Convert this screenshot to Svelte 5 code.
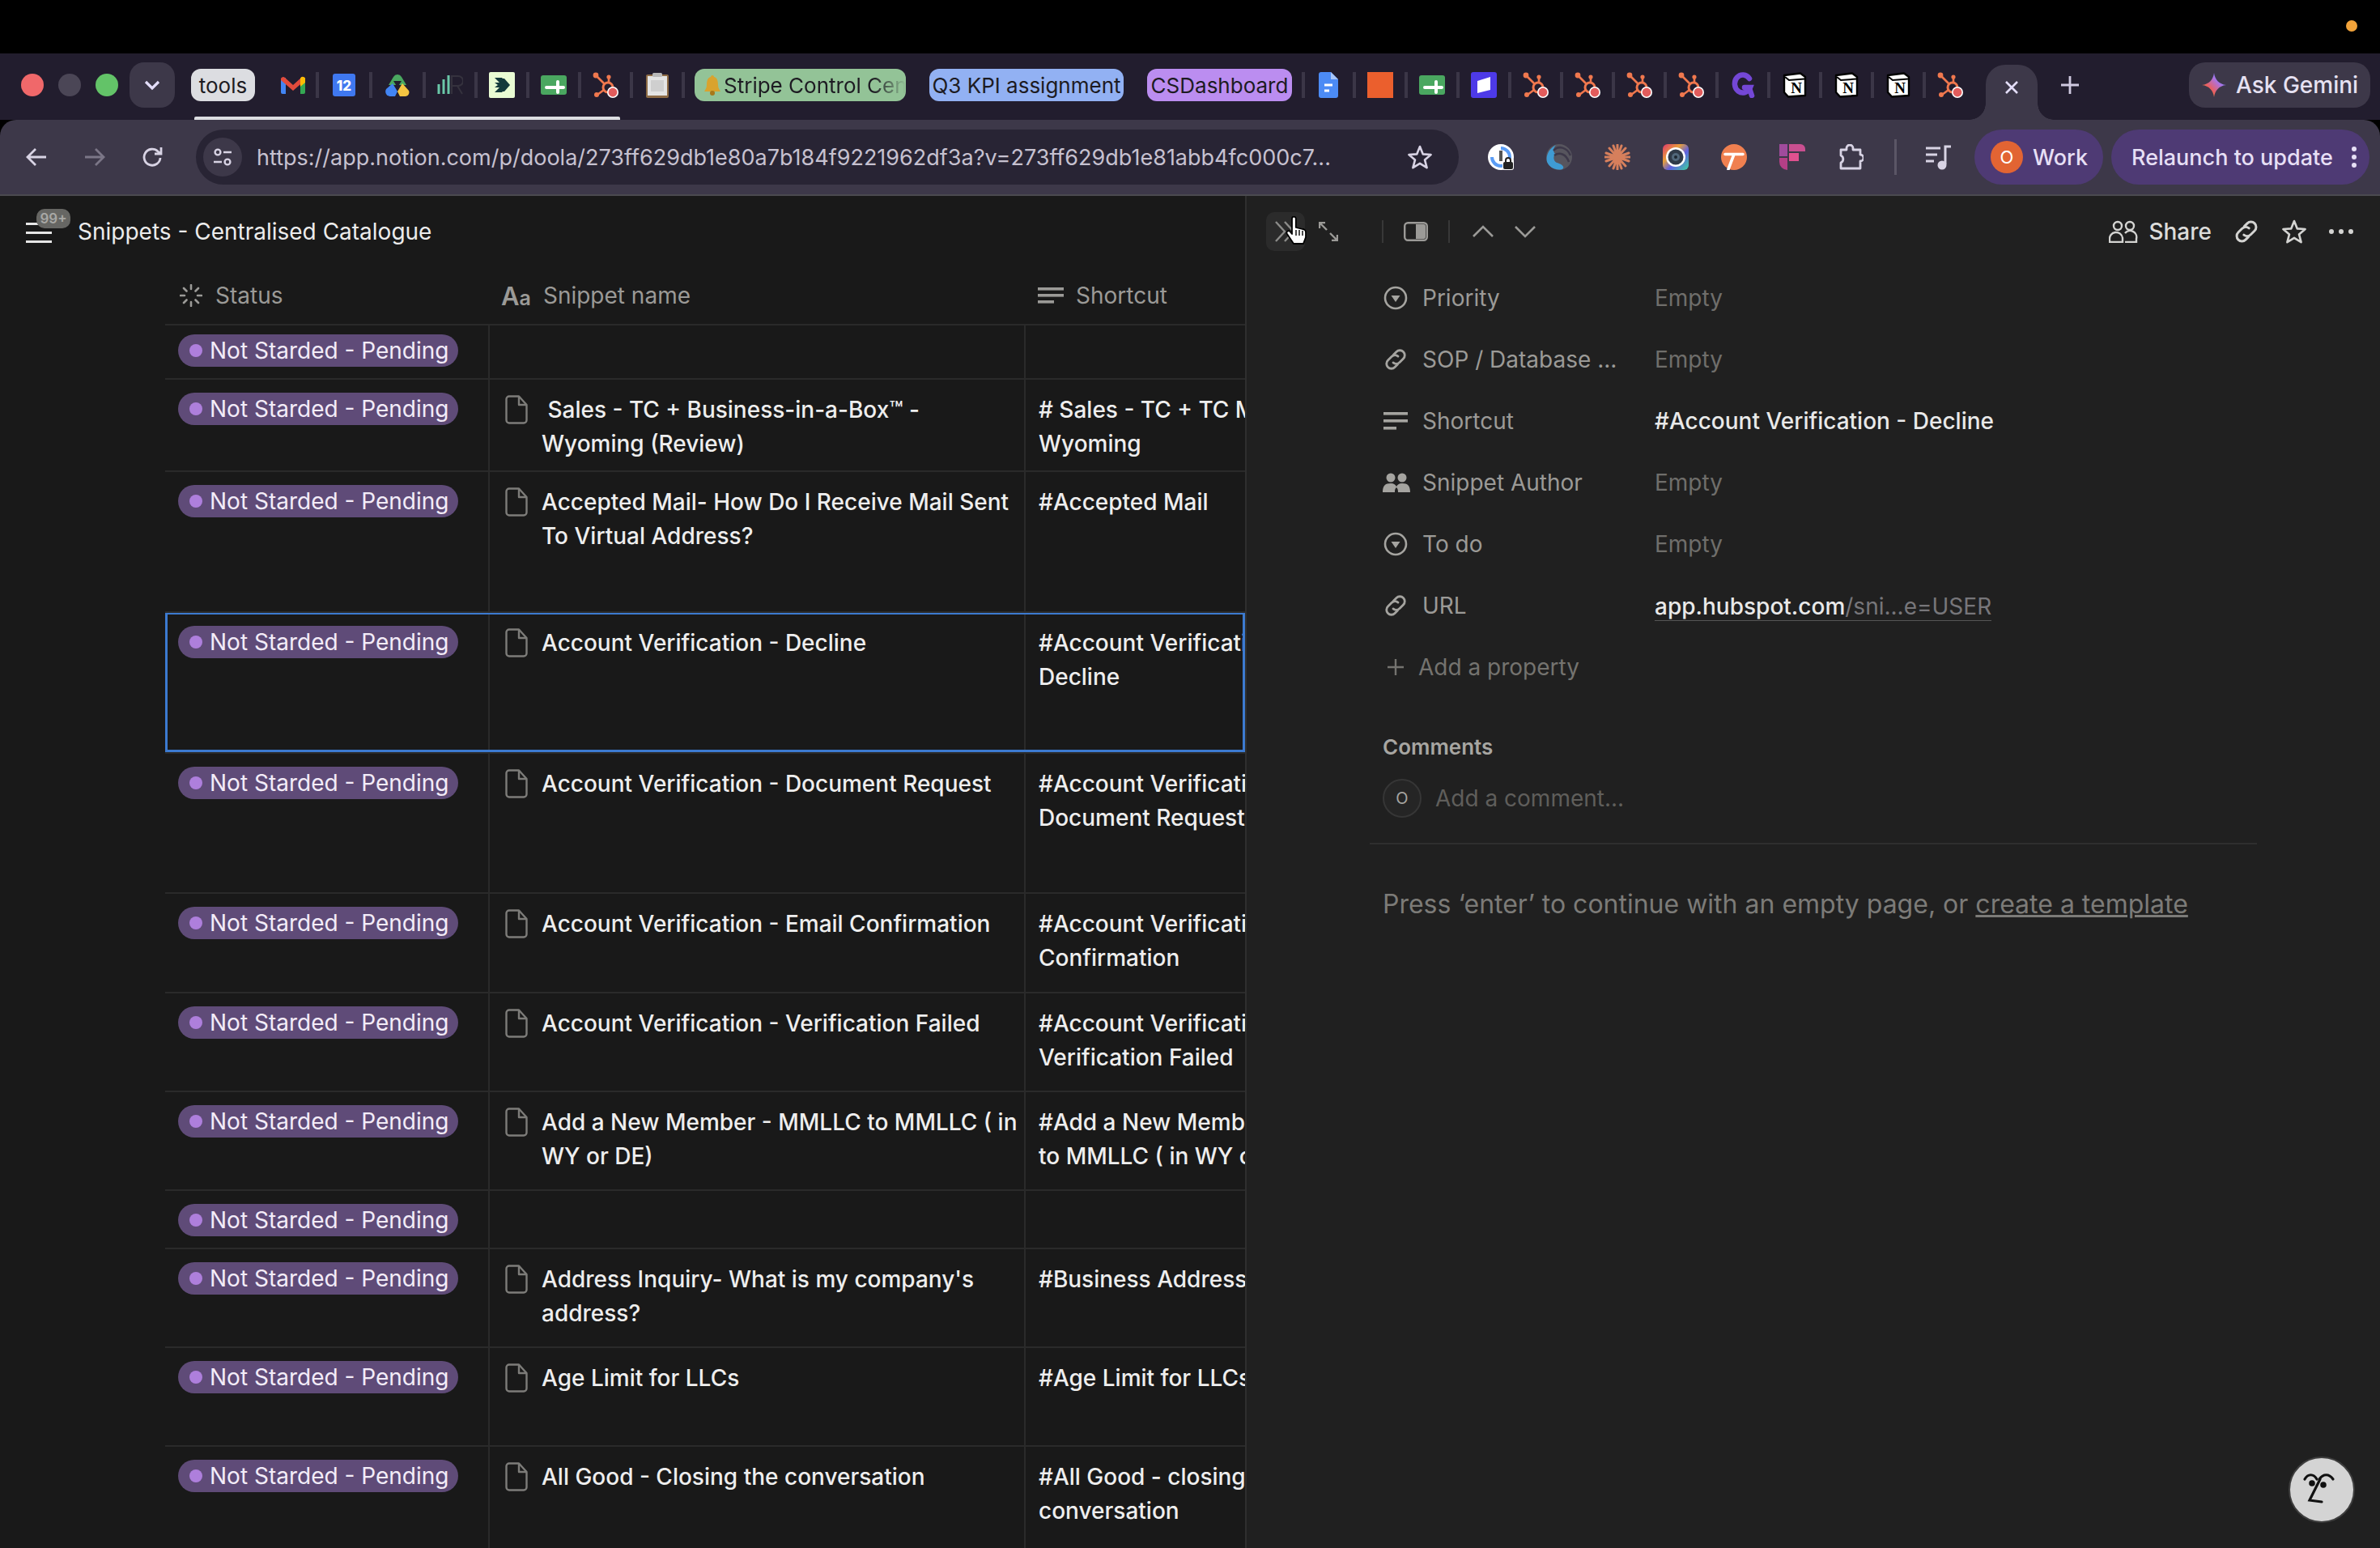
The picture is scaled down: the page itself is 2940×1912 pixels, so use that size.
<script>
  const rows = [
    { h: 67, first: true },
    { h: 114, name: [' Sales - TC + Business-in-a-Box™ -', 'Wyoming (Review)'], short: ['# Sales - TC + TC Mail', 'Wyoming'] },
    { h: 174, name: ['Accepted Mail- How Do I Receive Mail Sent', 'To Virtual Address?'], short: ['#Accepted Mail'] },
    { h: 174, sel: true, name: ['Account Verification - Decline'], short: ['#Account Verification -', 'Decline'] },
    { h: 173, name: ['Account Verification - Document Request'], short: ['#Account Verification -', 'Document Request'] },
    { h: 123, name: ['Account Verification - Email Confirmation'], short: ['#Account Verification - Email', 'Confirmation'] },
    { h: 122, name: ['Account Verification - Verification Failed'], short: ['#Account Verification -', 'Verification Failed'] },
    { h: 122, name: ['Add a New Member - MMLLC to MMLLC ( in', 'WY or DE)'], short: ['#Add a New Member - MMLLC', 'to MMLLC ( in WY or DE)'] },
    { h: 72 },
    { h: 122, name: ["Address Inquiry- What is my company's", 'address?'], short: ['#Business Address'] },
    { h: 122, name: ['Age Limit for LLCs'], short: ['#Age Limit for LLCs'] },
    { h: 130, name: ['All Good - Closing the conversation'], short: ['#All Good - closing the', 'conversation'] }
  ]

  const props = [
    { icon: 'select', label: 'Priority', value: 'Empty' },
    { icon: 'link', label: 'SOP / Database ...', value: 'Empty' },
    { icon: 'lines', label: 'Shortcut', value: '#Account Verification - Decline', filled: true },
    { icon: 'people', label: 'Snippet Author', value: 'Empty' },
    { icon: 'select', label: 'To do', value: 'Empty' },
    { icon: 'link', label: 'URL', url: true }
  ]
</script>

{#snippet hubspot()}
  <svg width="32" height="32" viewBox="0 0 32 32">
    <g stroke="#f0784e" fill="none" stroke-width="2.6">
      <path d="M4 4 L15 15" />
      <path d="M20 7 V13" />
      <path d="M6 28 L14 22" />
      <circle cx="19" cy="19" r="6" stroke-width="3" />
    </g>
    <circle cx="4" cy="4" r="3.4" fill="#f0784e" />
    <circle cx="20" cy="6" r="2.6" fill="#f0784e" />
    <circle cx="5" cy="28" r="3" fill="#f0784e" />
    <circle cx="25" cy="25" r="7" fill="#fff" />
    <circle cx="25" cy="25" r="5.4" fill="#e25c5c" />
  </svg>
{/snippet}

{#snippet notion()}
  <svg width="32" height="32" viewBox="0 0 32 32">
    <path d="M3 4 L23 1.5 L29 6 V29 L8 30.5 L3 25 Z" fill="#fff" stroke="#000" stroke-width="2.4" stroke-linejoin="round" />
    <path d="M4 6 L9 10 L28 8.5" fill="none" stroke="#000" stroke-width="2" />
    <text x="18" y="26" text-anchor="middle" font-size="19" font-weight="700" font-family="Liberation Serif, serif" fill="#000">N</text>
  </svg>
{/snippet}

{#snippet sheets()}
  <svg width="32" height="24" viewBox="0 0 32 24">
    <rect width="32" height="24" rx="3" fill="#4aa760" />
    <path d="M7 15 H28 M21 8 V21" stroke="#fff" stroke-width="4" stroke-linecap="round" />
  </svg>
{/snippet}

{#snippet linkIcon(size)}
  <svg width={size} height={size} viewBox="0 0 32 32" fill="none" stroke="currentColor" stroke-width="2.8" stroke-linecap="round">
    <path d="M13.5 10 L17 6.5 a6 6 0 0 1 8.5 8.5 L21 19.5 a6 6 0 0 1 -8 0.4" />
    <path d="M18.5 22 L15 25.5 a6 6 0 0 1 -8.5 -8.5 L11 12.5 a6 6 0 0 1 8 -0.4" />
  </svg>
{/snippet}

{#snippet star(size, color)}
  <svg width={size} height={size} viewBox="0 0 32 32" fill="none" stroke={color} stroke-width="2.6" stroke-linejoin="round">
    <path d="M16 3 L19.8 12.4 L29.6 13 L22 19.4 L24.6 29.2 L16 23.8 L7.4 29.2 L10 19.4 L2.4 13 L12.2 12.4 Z" />
  </svg>
{/snippet}

{#snippet docIcon()}
  <svg class="doc" width="28" height="36" viewBox="0 0 28 36" fill="none" stroke="#7d7c79" stroke-width="2.4" stroke-linejoin="round">
    <path d="M5 1.5 H17 L26.5 12 V31 a3.5 3.5 0 0 1 -3.5 3.5 H5 a3.5 3.5 0 0 1 -3.5 -3.5 V5 a3.5 3.5 0 0 1 3.5 -3.5 Z" />
    <path d="M17 1.5 V12 H26.5" />
  </svg>
{/snippet}

<div class="page">
  <div class="menubar"><span class="mic"></span></div>

  <div class="tabstrip">
    <div class="lights">
      <i class="red"></i><i class="gray"></i><i class="green"></i>
    </div>
    <button class="tabsearch" aria-label="tab search">
      <svg width="20" height="14" viewBox="0 0 20 14" fill="none" stroke="#e4defa" stroke-width="3.2"><path d="M2 3 L10 11 L18 3" /></svg>
    </button>
    <div class="group-label tools">tools</div>

    <div class="cell first">
      <svg width="30" height="22" viewBox="0 0 30 22">
        <path d="M0 20 V4 L6 2 V22 H2 a2 2 0 0 1 -2 -2 Z" fill="#4285f4" />
        <path d="M24 22 V2 L30 4 V20 a2 2 0 0 1 -2 2 Z" fill="#34a853" />
        <path d="M0 5 a3 3 0 0 1 5 -3 L15 11 L25 2 a3 3 0 0 1 5 3 L15 18 Z" fill="#e24b3c" />
        <path d="M24 3 a3 3 0 0 1 6 2 V8 L24 13 Z" fill="#fbbc04" />
      </svg>
    </div>
    <div class="cell wide">
      <svg width="28" height="28" viewBox="0 0 28 28">
        <rect width="28" height="28" rx="3" fill="#3f78f0" />
        <text x="14" y="20.5" text-anchor="middle" font-size="17" font-weight="800" font-family="Inter, sans-serif" fill="#fff">12</text>
      </svg>
    </div>
    <div class="cell wide">
      <svg width="30" height="28" viewBox="0 0 30 28">
        <path d="M15 1 a6 6 0 0 1 5 3 L26 14 H4 L10 4 a6 6 0 0 1 5 -3 Z" fill="#4aa860" />
        <path d="M10 9 H20 L15 17 Z" fill="#221d2e" />
        <path d="M9 12 L15 22 L12 28 H6 a6 6 0 0 1 -5 -9 Z" fill="#4285f4" />
        <path d="M21 12 L29 21 a5 5 0 0 1 -5 7 H18 L15 22 Z" fill="#f5c542" />
      </svg>
    </div>
    <div class="cell">
      <svg width="32" height="26" viewBox="0 0 32 26" fill="none">
        <path d="M2 12 V24 M8 6 V24 M14 1 V24" stroke="#6ac8a8" stroke-width="3" />
        <path d="M18 24 V2 H26 a5.5 5.5 0 0 1 0 12 H18 M25 14 L31 24" stroke="#35323e" stroke-width="2" />
      </svg>
    </div>
    <div class="cell">
      <svg width="32" height="32" viewBox="0 0 32 32">
        <rect width="32" height="32" rx="2" fill="#e9fbd3" />
        <path d="M7 7 H16 L24 16 L16 25 H7 L13 19 H7 L11 16 L7 13 H13 Z M15 8 H19 L26 16 L19 24 H15 L21 16 Z" fill="#143a3c" />
      </svg>
    </div>
    <div class="cell">{@render sheets()}</div>
    <div class="cell">{@render hubspot()}</div>
    <div class="cell">
      <svg width="28" height="32" viewBox="0 0 28 32">
        <rect y="3" width="28" height="29" rx="2" fill="#8d6b45" />
        <rect x="2" y="5" width="24" height="24" fill="#e4e4e4" />
        <rect x="6" y="10" width="16" height="14" fill="#cfcfcf" />
        <rect x="8" y="1" width="12" height="5" rx="1.5" fill="#b9b9b9" />
      </svg>
    </div>

    <div class="group-label stripe">
      <svg width="20" height="26" viewBox="0 0 20 26">
        <path d="M10 1 a2 2 0 0 1 2 2 c4 1 5 5 5 10 c0 4 2 6 3 8 H0 c1 -2 3 -4 3 -8 c0 -5 1 -9 5 -10 a2 2 0 0 1 2 -2 Z" fill="#d9a32e" />
        <circle cx="10" cy="23" r="3" fill="#a8781a" />
      </svg>
      <span class="fade">Stripe Control Cen</span>
    </div>
    <div class="group-label kpi">Q3 KPI assignment</div>
    <div class="group-label cs">CSDashboard</div>

    <div class="sep"></div>
    <div class="cell">
      <svg width="24" height="32" viewBox="0 0 24 32">
        <path d="M3 0 H15 L24 9 V29 a3 3 0 0 1 -3 3 H3 a3 3 0 0 1 -3 -3 V3 a3 3 0 0 1 3 -3 Z" fill="#4c8bf5" />
        <path d="M15 0 L24 9 H15 Z" fill="#a7c6fa" />
        <path d="M7 16 H17 M7 23 H13" stroke="#fff" stroke-width="3" />
      </svg>
    </div>
    <div class="cell"><span class="orange"></span></div>
    <div class="cell">{@render sheets()}</div>
    <div class="cell">
      <svg width="32" height="32" viewBox="0 0 32 32">
        <rect width="32" height="32" rx="3" fill="#4d3ae8" />
        <path d="M8 11 L24 6 V22 L8 26 Z" fill="#fff" />
      </svg>
    </div>
    <div class="cell">{@render hubspot()}</div>
    <div class="cell">{@render hubspot()}</div>
    <div class="cell">{@render hubspot()}</div>
    <div class="cell">{@render hubspot()}</div>
    <div class="cell">
      <svg width="32" height="32" viewBox="0 0 32 32" fill="none" stroke="#7447d6" stroke-width="6.5" stroke-linecap="round">
        <path d="M24 8 a10 11 0 1 0 1 11 H18" />
        <path d="M24 20 L27 29" />
      </svg>
    </div>
    <div class="cell">{@render notion()}</div>
    <div class="cell">{@render notion()}</div>
    <div class="cell">{@render notion()}</div>
    <div class="cell last">{@render hubspot()}</div>

    <div class="active-tab">
      <svg width="18" height="18" viewBox="0 0 18 18" fill="none" stroke="#e4defa" stroke-width="2.6"><path d="M2 2 L16 16 M16 2 L2 16" /></svg>
    </div>
    <div class="newtab">
      <svg width="22" height="22" viewBox="0 0 22 22" fill="none" stroke="#cfc9e0" stroke-width="2.8"><path d="M11 0 V22 M0 11 H22" /></svg>
    </div>
    <div class="gemini">
      <svg width="30" height="30" viewBox="0 0 30 30">
        <defs>
          <linearGradient id="gem" x1="0" y1="1" x2="1" y2="0">
            <stop offset="0" stop-color="#f6c443" />
            <stop offset="0.35" stop-color="#ea5f5f" />
            <stop offset="0.65" stop-color="#a774e8" />
            <stop offset="1" stop-color="#3f8cf5" />
          </linearGradient>
        </defs>
        <path d="M15 0 C16 8 21 14 30 15 C21 16 16 22 15 30 C14 22 9 16 0 15 C9 14 14 8 15 0 Z" fill="url(#gem)" />
      </svg>
      <span>Ask Gemini</span>
    </div>
    <div class="strip-line"></div>
  </div>

  <div class="toolbar">
    <div class="navs">
      <svg width="26" height="26" viewBox="0 0 26 26" fill="none" stroke="#d8d3e4" stroke-width="2.8"><path d="M25 13 H2 M12 3 L2 13 L12 23" /></svg>
      <svg width="26" height="26" viewBox="0 0 26 26" fill="none" stroke="#7b7687" stroke-width="2.8"><path d="M1 13 H24 M14 3 L24 13 L14 23" /></svg>
      <svg width="26" height="26" viewBox="0 0 26 26" fill="none" stroke="#d8d3e4" stroke-width="2.8"><path d="M22 14 a10 10 0 1 1 -3 -8 L23 9 M23 1 V9 H15" /></svg>
    </div>
    <div class="omnibox">
      <span class="tune">
        <svg width="24" height="24" viewBox="0 0 24 24" fill="none" stroke="#d8d3e4" stroke-width="2.4">
          <circle cx="6" cy="6" r="3.4" /><path d="M13 6 H23 M1 18 H11" /><circle cx="18" cy="18" r="3.4" />
        </svg>
      </span>
      <span class="url">https://app.notion.com/p/doola/273ff629db1e80a7b184f9221962df3a?v=273ff629db1e81abb4fc000c7...</span>
      <span class="urlstar">{@render star(32, '#d8d3e4')}</span>
    </div>
    <div class="exts">
      <span class="ext">
        <svg width="32" height="32" viewBox="0 0 32 32">
          <circle cx="16" cy="16" r="16" fill="#fff" />
          <path d="M16 5 a11 11 0 1 1 -11 11" fill="none" stroke="#5a9cf5" stroke-width="4" />
          <rect x="14" y="8" width="4" height="13" fill="#555" />
          <rect x="18" y="18" width="14" height="14" rx="3" fill="#fff" />
          <rect x="19" y="22" width="12" height="9" rx="2" fill="#222" />
          <path d="M22 22 V20 a3 3 0 0 1 6 0 V22" fill="none" stroke="#222" stroke-width="2" />
        </svg>
      </span>
      <span class="ext">
        <svg width="32" height="32" viewBox="0 0 32 32">
          <circle cx="16" cy="16" r="16" fill="#57555e" />
          <path d="M12 1 C4 5 -1 14 1 22 C4 29 12 33 20 31 C24 28 18 24 13 23 C8 20 9 15 11 12 C8 9 9 4 12 1 Z" fill="#3f9bd3" />
          <path d="M6 2 L30 14" stroke="#3d3849" stroke-width="0" />
          <path d="M9 8 C15 1 26 4 30 14 M10 14 C17 9 25 13 28 22" stroke="#3d3849" stroke-width="2.5" fill="none" />
        </svg>
      </span>
      <span class="ext">
        <svg width="32" height="32" viewBox="0 0 32 32" stroke="#d67f5c" stroke-width="3" stroke-linecap="round">
          <path d="M16 1 V31 M1 16 H31 M6 5 L26 27 M26 5 L6 27 M11 2 L21 30 M21 2 L11 30 M2 11 L30 21 M2 21 L30 11" />
        </svg>
      </span>
      <span class="ext">
        <svg width="32" height="32" viewBox="0 0 32 32">
          <defs>
            <linearGradient id="cam" x1="0" y1="0" x2="1" y2="1">
              <stop offset="0" stop-color="#e0366c" />
              <stop offset="0.35" stop-color="#e8a03a" />
              <stop offset="0.6" stop-color="#5f5fe0" />
              <stop offset="1" stop-color="#3cd6a0" />
            </linearGradient>
          </defs>
          <rect width="32" height="32" rx="6" fill="url(#cam)" />
          <circle cx="16" cy="16" r="12" fill="#fff" />
          <circle cx="16" cy="16" r="9.5" fill="#2f3a48" />
          <circle cx="16" cy="16" r="5" fill="#51677a" />
          <circle cx="16" cy="16" r="2" fill="#1d2731" />
        </svg>
      </span>
      <span class="ext">
        <svg width="32" height="32" viewBox="0 0 32 32">
          <circle cx="16" cy="16" r="16" fill="#f08050" />
          <path d="M5 12.5 H27 M16 12.5 L9 31" stroke="#fff" stroke-width="3.6" stroke-linecap="round" fill="none" />
        </svg>
      </span>
      <span class="ext">
        <svg width="32" height="32" viewBox="0 0 32 32">
          <rect width="10" height="15" fill="#a04b9c" />
          <path d="M12 0 H26 a6 6 0 0 1 6 6 V9 H12 Z" fill="#c94f90" />
          <rect x="12" y="11" width="12" height="10" fill="#e0518f" />
          <path d="M0 17 H10 V32 A10 10 0 0 1 0 22 Z" fill="#b53f86" />
        </svg>
      </span>
      <span class="ext">
        <svg width="32" height="32" viewBox="0 0 32 32" fill="none" stroke="#d8d3e4" stroke-width="2.8" stroke-linejoin="round">
          <path d="M4 7 H11 V5 a4 4 0 0 1 8 0 V7 H28 V13 a4 4 0 0 1 0 8 V30 H4 V23 a5 5 0 0 0 0 -9 Z" />
        </svg>
      </span>
      <span class="ext-sep"></span>
      <span class="ext music">
        <svg width="32" height="32" viewBox="0 0 32 32" fill="none" stroke="#d8d3e4" stroke-width="3">
          <path d="M0 5 H18 M0 13 H14 M0 21 H10" />
          <path d="M24 25 V3 H31" />
          <circle cx="20" cy="26" r="4" fill="#d8d3e4" />
        </svg>
      </span>
    </div>
    <div class="profile">
      <span class="badge">O</span>
      <span>Work</span>
    </div>
    <div class="relaunch">
      <span>Relaunch to update</span>
      <svg width="8" height="28" viewBox="0 0 8 28" fill="#e6dff5"><circle cx="4" cy="4" r="3" /><circle cx="4" cy="14" r="3" /><circle cx="4" cy="24" r="3" /></svg>
    </div>
  </div>

  <div class="main">
    <section class="db">
      <header class="db-top">
        <div class="burger">
          <i></i><i></i><i></i>
          <span class="count">99+</span>
        </div>
        <span class="title">Snippets - Centralised Catalogue</span>
      </header>

      <div class="table">
        <div class="row head">
          <div class="hcell">
            <svg width="28" height="28" viewBox="0 0 28 28" stroke="#9b9a97" stroke-width="2.6" stroke-linecap="round">
              <path d="M14 1 V6 M14 22 V27 M1 14 H6 M22 14 H27 M5 5 L8.5 8.5 M19.5 19.5 L23 23 M23 5 L19.5 8.5 M8.5 19.5 L5 23" />
            </svg>
            <span>Status</span>
          </div>
          <div class="hcell second">
            <span class="aa">A<small>a</small></span>
            <span>Snippet name</span>
          </div>
          <div class="hcell third">
            <svg width="32" height="24" viewBox="0 0 32 24" fill="#9b9a97"><rect width="32" height="3.6" y="2" /><rect width="32" height="3.6" y="10" /><rect width="20" height="3.6" y="18" /></svg>
            <span>Shortcut</span>
          </div>
        </div>

        {#each rows as r}
          <div class="row" class:first={r.first} style="height:{r.h}px">
            <div class="c status">
              <span class="pill"><i></i>Not Starded - Pending</span>
            </div>
            <div class="c name">
              {#if r.name}
                {@render docIcon()}
                <div class="lines">
                  {#each r.name as l}<div class="line">{l}</div>{/each}
                </div>
              {/if}
            </div>
            <div class="c short">
              {#if r.short}
                {#each r.short as l}<div class="line">{l}</div>{/each}
              {/if}
            </div>
            {#if r.sel}<div class="selected"></div>{/if}
          </div>
        {/each}
      </div>
    </section>

    <aside class="peek">
      <header class="peek-top">
        <span class="hoverbtn">
          <svg width="30" height="28" viewBox="0 0 30 28" fill="none" stroke="#8c8c8a" stroke-width="2.4"><path d="M3 2 L14 14 L3 26 M14 2 L25 14 L14 26" /></svg>
        </span>
        <span class="ticon expand">
          <svg width="24" height="24" viewBox="0 0 24 24" fill="none" stroke="#9b9a97" stroke-width="2.4"><path d="M1 8 V1 H8 M1 1 L10 10 M23 16 V23 H16 M23 23 L14 14" /></svg>
        </span>
        <span class="vsep"></span>
        <span class="ticon">
          <svg width="30" height="24" viewBox="0 0 30 24"><rect x="1.2" y="1.2" width="27.6" height="21.6" rx="4" fill="none" stroke="#9b9a97" stroke-width="2.4" /><path d="M15 3 H25 a2 2 0 0 1 2 2 V19 a2 2 0 0 1 -2 2 H15 Z" fill="#9b9a97" /></svg>
        </span>
        <span class="vsep"></span>
        <span class="ticon up">
          <svg width="26" height="16" viewBox="0 0 26 16" fill="none" stroke="#9b9a97" stroke-width="2.6"><path d="M1 14 L13 2 L25 14" /></svg>
        </span>
        <span class="ticon down">
          <svg width="26" height="16" viewBox="0 0 26 16" fill="none" stroke="#9b9a97" stroke-width="2.6"><path d="M1 2 L13 14 L25 2" /></svg>
        </span>

        <div class="peek-actions">
          <span class="share">
            <svg width="36" height="28" viewBox="0 0 36 28" fill="none" stroke="#d4d4d2" stroke-width="2.4">
              <circle cx="11" cy="7" r="5" /><circle cx="26" cy="7" r="5" />
              <path d="M1 27 V24 a8 8 0 0 1 16 -2 V27 Z M20 16 a8 8 0 0 1 14 7 V27 H20" />
            </svg>
            Share
          </span>
          <span class="act link">{@render linkIcon(34)}</span>
          <span class="act">{@render star(32, '#d4d4d2')}</span>
          <span class="act">
            <svg width="32" height="8" viewBox="0 0 32 8" fill="#d4d4d2"><circle cx="4" cy="4" r="3" /><circle cx="16" cy="4" r="3" /><circle cx="28" cy="4" r="3" /></svg>
          </span>
        </div>
      </header>

      <div class="props">
        {#each props as p}
          <div class="prop">
            <span class="picon">
              {#if p.icon === 'select'}
                <svg width="30" height="30" viewBox="0 0 30 30"><circle cx="15" cy="15" r="13" fill="none" stroke="currentColor" stroke-width="2.6" /><path d="M9.5 12 H20.5 L15 20 Z" fill="currentColor" /></svg>
              {:else if p.icon === 'link'}
                {@render linkIcon(32)}
              {:else if p.icon === 'lines'}
                <svg width="30" height="24" viewBox="0 0 30 24" fill="currentColor"><rect width="30" height="3.6" y="1" /><rect width="30" height="3.6" y="10" /><rect width="16" height="3.6" y="19" /></svg>
              {:else}
                <svg width="34" height="24" viewBox="0 0 34 24" fill="currentColor"><circle cx="10" cy="6" r="5.5" /><circle cx="24" cy="6" r="5.5" /><path d="M0 24 C0 16 3 13 10 13 C14 13 16 15 17 17 C18 15 20 13 24 13 C31 13 34 16 34 24 H19 C19 20 18 19 17 18 C16 19 15 20 15 24 Z" /></svg>
              {/if}
            </span>
            <span class="plabel">{p.label}</span>
            {#if p.url}
              <span class="pval url-val"><b>app.hubspot.com</b><em>/sni...e=USER</em></span>
            {:else}
              <span class="pval" class:filled={p.filled}>{p.value}</span>
            {/if}
          </div>
        {/each}
        <div class="prop add">
          <span class="picon">
            <svg width="22" height="22" viewBox="0 0 22 22" fill="none" stroke="currentColor" stroke-width="2.4"><path d="M11 1 V21 M1 11 H21" /></svg>
          </span>
          <span>Add a property</span>
        </div>
      </div>

      <div class="comments">
        <div class="ctitle">Comments</div>
        <div class="cinput">
          <span class="avatar">O</span>
          <span>Add a comment...</span>
        </div>
      </div>
      <div class="divider"></div>
      <p class="hint">Press ‘enter’ to continue with an empty page, or <u>create a template</u></p>
    </aside>
  </div>

  <svg class="cursor" width="28" height="36" viewBox="0 0 28 36">
    <path d="M8 3 a2.4 2.4 0 0 1 4.8 0 V14 L21 16 a4 4 0 0 1 4 4 V26 L22 34 H10 L2 22 a2.3 2.3 0 0 1 3.5 -3 L8 22 Z" fill="#fff" stroke="#000" stroke-width="1.8" stroke-linejoin="round" />
    <path d="M13 17 V24 M17 17 V24 M21 18 V24" stroke="#000" stroke-width="1.4" />
  </svg>

  <button class="help" aria-label="help">
    <svg width="50" height="50" viewBox="0 0 50 50" fill="none" stroke="#111" stroke-width="3.2" stroke-linecap="round">
      <path d="M4 12 C8 5 15 5 19 12" />
      <path d="M22 12 C27 5 34 5 39 12" />
      <path d="M23 12 L10 38 L25 40" />
      <circle cx="13" cy="17" r="2.2" fill="#111" />
      <circle cx="27" cy="19" r="2.2" fill="#111" />
    </svg>
  </button>
</div>

<style>
  :global(body) {
    margin: 0;
    background: #000;
  }
  .page {
    position: relative;
    width: 2940px;
    height: 1912px;
    overflow: hidden;
    display: flex;
    flex-direction: column;
    font-family: Inter, "Liberation Sans", sans-serif;
    font-size: 28px;
    color: #e6e6e6;
  }

  .menubar {
    height: 66px;
    flex: none;
    background: #000;
    display: flex;
    justify-content: flex-end;
    padding: 25px 28px 0 0;
    box-sizing: border-box;
  }
  .mic {
    width: 14px;
    height: 14px;
    border-radius: 50%;
    background: #f2a33a;
  }

  .tabstrip {
    position: relative;
    height: 82px;
    flex: none;
    background: #221d2e;
    display: flex;
    align-items: center;
    padding: 0 12px 0 26px;
    box-sizing: border-box;
    padding-bottom: 4px;
  }
  .lights {
    display: flex;
    gap: 18px;
    margin-right: 14px;
  }
  .lights i {
    width: 28px;
    height: 28px;
    border-radius: 50%;
  }
  .red { background: #f0686a; }
  .gray { background: #4b4656; }
  .green { background: #63c368; }
  .tabsearch {
    width: 56px;
    height: 56px;
    border: 0;
    padding: 0;
    border-radius: 18px;
    background: #3d3849;
    display: grid;
    place-items: center;
    margin-right: 20px;
  }
  .group-label {
    height: 40px;
    border-radius: 12px;
    display: flex;
    align-items: center;
    justify-content: center;
    gap: 4px;
    color: #1d1b22;
    font-size: 26px;
    flex: none;
    box-sizing: border-box;
    white-space: nowrap;
    overflow: hidden;
  }
  .tools { width: 79px; background: #dcdde1; margin-right: 19px; }
  .stripe { width: 261px; background: #93c397; margin-left: 12px; margin-right: 29px; justify-content: flex-start; padding-left: 12px; }
  .fade {
    -webkit-mask-image: linear-gradient(90deg, #000 82%, transparent 100%);
    mask-image: linear-gradient(90deg, #000 82%, transparent 100%);
    overflow: hidden;
    flex: 1;
  }
  .kpi { width: 240px; background: #92b1f3; margin-right: 29px; }
  .cs { width: 179px; background: #bb8df0; margin-right: 12px; }
  .sep {
    width: 4px;
    height: 32px;
    background: #3b3647;
    margin-right: -1px;
  }
  .cell {
    width: 64px;
    height: 32px;
    flex: none;
    box-sizing: border-box;
    border-right: 4px solid #3b3647;
    display: flex;
    align-items: center;
    justify-content: center;
  }
  .cell.wide { width: 66px; }
  .cell.first { width: 60px; }
  .cell.last { border-right: 0; width: 60px; }
  .orange {
    width: 32px;
    height: 32px;
    background: #eb5f2d;
  }
  .active-tab {
    position: relative;
    align-self: flex-end;
    width: 64px;
    height: 68px;
    margin-left: 14px;
    margin-bottom: -4px;
    background: #3d3849;
    border-radius: 24px 24px 0 0;
    display: flex;
    justify-content: center;
    padding-top: 19px;
    box-sizing: border-box;
  }
  .active-tab::before,
  .active-tab::after {
    content: "";
    position: absolute;
    bottom: 0;
    width: 20px;
    height: 20px;
  }
  .active-tab::before {
    left: -20px;
    background: radial-gradient(circle at 0 0, transparent 19.5px, #3d3849 20px);
  }
  .active-tab::after {
    right: -20px;
    background: radial-gradient(circle at 100% 0, transparent 19.5px, #3d3849 20px);
  }
  .newtab {
    margin-left: 29px;
    display: flex;
  }
  .gemini {
    margin-left: auto;
    width: 224px;
    height: 56px;
    border-radius: 20px;
    background: #3d3849;
    display: flex;
    align-items: center;
    gap: 12px;
    padding-left: 16px;
    box-sizing: border-box;
    font-size: 28px;
    font-weight: 500;
    color: #e6e1f2;
  }
  .strip-line {
    position: absolute;
    left: 240px;
    width: 526px;
    bottom: 0;
    height: 4px;
    border-radius: 2px 2px 0 0;
    background: #dcdde1;
  }

  .toolbar {
    height: 94px;
    flex: none;
    background: #3d3849;
    border-bottom: 2px solid #4b4a50;
    border-radius: 20px 20px 0 0;
    box-sizing: border-box;
    display: flex;
    align-items: flex-start;
    padding-top: 12px;
    position: relative;
  }
  .navs {
    width: 242px;
    height: 68px;
    flex: none;
    display: flex;
    align-items: center;
    gap: 46px;
    padding-left: 32px;
    box-sizing: border-box;
  }
  .omnibox {
    width: 1560px;
    height: 68px;
    flex: none;
    background: #282434;
    border-radius: 34px;
    display: flex;
    align-items: center;
    box-sizing: border-box;
    padding-left: 9px;
  }
  .tune {
    width: 48px;
    height: 48px;
    border-radius: 50%;
    background: #3d3849;
    display: grid;
    place-items: center;
    margin-right: 18px;
    flex: none;
  }
  .url {
    color: #c6c1d0;
    font-size: 27px;
    white-space: nowrap;
    width: 1384px;
    flex: none;
  }
  .urlstar {
    margin-left: 37px;
    display: flex;
  }
  .exts {
    display: flex;
    align-items: center;
    height: 68px;
    padding-left: 36px;
    gap: 40px;
    width: 636px;
    box-sizing: border-box;
    flex: none;
  }
  .ext {
    width: 32px;
    height: 32px;
    flex: none;
    display: block;
  }
  .ext svg { display: block; }
  .ext-sep {
    width: 3px;
    height: 44px;
    background: #5b5666;
    margin: 0 -4px 0 -2px;
  }
  .profile {
    position: absolute;
    left: 2439px;
    top: 12px;
  }
  .profile,
  .relaunch {
    height: 68px;
    border-radius: 34px;
    background: #4e3a74;
    display: flex;
    align-items: center;
    box-sizing: border-box;
    color: #e6dff5;
    font-size: 27px;
    font-weight: 500;
  }
  .profile {
    width: 159px;
    padding-left: 20px;
    gap: 12px;
  }
  .badge {
    width: 40px;
    height: 40px;
    border-radius: 50%;
    background: #e26433;
    color: #fff;
    font-size: 22px;
    font-weight: 400;
    display: grid;
    place-items: center;
  }
  .relaunch {
    position: absolute;
    left: 2608px;
    top: 12px;
    width: 319px;
    padding-left: 25px;
    gap: 22px;
  }

  .main {
    flex: 1;
    min-height: 0;
    display: flex;
  }
  .db {
    width: 1538px;
    flex: none;
    background: #191919;
    overflow: hidden;
  }
  .db-top {
    height: 88px;
    display: flex;
    align-items: center;
    box-sizing: border-box;
    padding-left: 32px;
  }
  .burger {
    position: relative;
    width: 32px;
    display: flex;
    flex-direction: column;
    gap: 8px;
    margin-right: 32px;
    padding-top: 2px;
  }
  .burger i {
    height: 3px;
    background: #e6e6e6;
    display: block;
  }
  .count {
    position: absolute;
    left: 13px;
    top: -15px;
    width: 42px;
    height: 24px;
    border-radius: 10px;
    background: #666663;
    color: #a8a8a5;
    font-size: 17px;
    line-height: 24px;
    text-align: center;
    font-weight: 600;
  }
  .title {
    color: #ececec;
    font-size: 28px;
  }
  .table {
    margin-left: 204px;
    width: 1334px;
  }
  .row {
    position: relative;
    display: grid;
    grid-template-columns: 399px 662px 273px;
    border-bottom: 2px solid #2a2a2a;
    box-sizing: border-box;
    overflow: hidden;
  }
  .row.head {
    height: 72px;
    overflow: visible;
  }
  .hcell {
    display: flex;
    align-items: center;
    color: #9b9a97;
    font-size: 28px;
    gap: 16px;
    padding-left: 18px;
  }
  .hcell.second {
    padding-left: 16px;
    gap: 15px;
  }
  .hcell.third {
    padding-left: 17px;
    gap: 15px;
  }
  .aa {
    font-size: 31px;
    font-weight: 600;
    line-height: 1;
    color: #9b9a97;
  }
  .aa small {
    font-size: 25px;
    font-weight: 600;
  }
  .c {
    box-sizing: border-box;
    padding-top: 16px;
    min-width: 0;
  }
  .first .c {
    padding-top: 11px;
  }
  .status {
    padding-left: 16px;
  }
  .pill {
    display: inline-flex;
    align-items: center;
    height: 40px;
    width: 346px;
    border-radius: 20px;
    background: #5f4b78;
    color: #f3ecf8;
    font-size: 28px;
    white-space: nowrap;
    box-sizing: border-box;
    padding-left: 14px;
    gap: 9px;
  }
  .pill i {
    width: 16px;
    height: 16px;
    border-radius: 50%;
    background: #ae7fdc;
    flex: none;
  }
  .name {
    border-left: 2px solid #2a2a2a;
    display: flex;
    padding-left: 19px;
  }
  .doc {
    flex: none;
    margin-top: 3px;
    margin-right: 17px;
  }
  .lines {
    min-width: 0;
  }
  .line {
    line-height: 42px;
    height: 42px;
    color: #eeeeee;
    font-size: 28px;
    font-weight: 500;
    white-space: pre;
  }
  .short {
    border-left: 2px solid #2a2a2a;
    padding-left: 16px;
    overflow: hidden;
  }
  .selected {
    position: absolute;
    left: 0;
    right: 0;
    top: -1px;
    height: 173px;
    border: 3px solid #3c7ad0;
    box-sizing: border-box;
    pointer-events: none;
  }

  .peek {
    flex: 1;
    min-width: 0;
    background: #202020;
    border-left: 2px solid #2f2f2f;
    box-sizing: border-box;
    padding-left: 168px;
  }
  .peek-top {
    height: 88px;
    margin-left: -168px;
    padding: 0 32px 0 24px;
    display: flex;
    align-items: center;
    box-sizing: border-box;
  }
  .hoverbtn {
    width: 48px;
    height: 48px;
    border-radius: 10px;
    background: #2b2b2b;
    display: grid;
    place-items: center;
  }
  .ticon {
    display: flex;
  }
  .expand { margin-left: 17px; margin-right: 29px; }
  .vsep {
    width: 2px;
    height: 28px;
    background: #383838;
    margin-right: 25px;
  }
  .ticon + .vsep { margin-left: 25px; }
  .up { margin-right: 26px; margin-left: 3px; }
  .peek-actions {
    margin-left: auto;
    display: flex;
    align-items: center;
    color: #dcdcda;
    gap: 26px;
  }
  .share {
    display: flex;
    align-items: center;
    gap: 13px;
    font-size: 28px;
    font-weight: 500;
  }
  .act {
    display: flex;
    color: #d4d4d2;
  }
  .prop {
    height: 76px;
    display: flex;
    align-items: center;
    font-size: 28px;
    color: #9b9a97;
  }
  .picon {
    width: 32px;
    height: 32px;
    margin-right: 17px;
    display: grid;
    place-items: center;
    flex: none;
    color: #a5a4a0;
  }
  .plabel {
    width: 287px;
    flex: none;
    white-space: nowrap;
  }
  .pval {
    color: #6f6e6b;
  }
  .pval.filled {
    color: #e9e9e9;
    font-weight: 500;
  }
  .url-val {
    border-bottom: 1px solid #555;
    line-height: 34px;
    margin-top: 3px;
  }
  .url-val b {
    font-weight: 500;
    color: #e9e9e9;
  }
  .url-val em {
    font-style: normal;
    color: #77767a;
  }
  .add {
    color: #74736f;
  }
  .add .picon {
    margin-right: 12px;
    color: #74736f;
  }
  .comments {
    margin-top: 43px;
  }
  .ctitle {
    font-size: 26px;
    font-weight: 600;
    line-height: 36px;
    color: #a7a6a2;
    margin-bottom: 21px;
  }
  .cinput {
    display: flex;
    align-items: center;
    gap: 17px;
    color: #5f5e5b;
  }
  .avatar {
    width: 48px;
    height: 48px;
    box-sizing: border-box;
    border: 2px solid #363636;
    border-radius: 50%;
    display: grid;
    place-items: center;
    background: #252525;
    font-size: 20px;
    color: #a5a4a0;
  }
  .divider {
    height: 2px;
    width: 1096px;
    margin: 31px 0 0 -16px;
    background: #2f2f2f;
  }
  .hint {
    margin: 50px 0 0;
    font-size: 32px;
    line-height: 48px;
    color: #7c7b78;
    white-space: nowrap;
  }
  .cursor {
    position: absolute;
    left: 1588px;
    top: 267px;
  }
  .help {
    position: absolute;
    left: 2827px;
    top: 1799px;
    width: 82px;
    height: 82px;
    padding: 0;
    border-radius: 50%;
    border: 2px solid #3e3e3e;
    background: #d4d4d4;
    display: grid;
    place-items: center;
    box-sizing: border-box;
  }
</style>
